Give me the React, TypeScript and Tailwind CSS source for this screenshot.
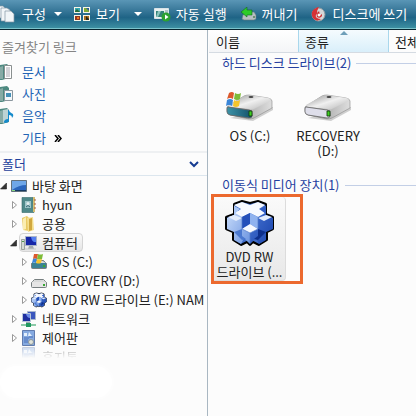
import React from 'react'

const DriveIcon = ({ windows, className }: { windows?: boolean; className: string }) => (
  <svg viewBox="0 0 48 28" className={className} aria-hidden="true">
    <defs>
      <linearGradient id="driveTop" x1="0" y1="0" x2="1" y2="1">
        <stop offset="0" stopColor="#8f8f8f" />
        <stop offset=".5" stopColor="#f0f0f0" />
        <stop offset="1" stopColor="#b4b4b4" />
      </linearGradient>
      <linearGradient id="driveSide" x1="0" y1="0" x2="1" y2="0">
        <stop offset="0" stopColor="#8a8a8a" />
        <stop offset="1" stopColor="#dedede" />
      </linearGradient>
      <linearGradient id="driveTeal" x1="0" y1="0" x2="1" y2="0">
        <stop offset="0" stopColor="#3c93a8" />
        <stop offset="1" stopColor="#14506a" />
      </linearGradient>
    </defs>
    <path d="M4 25l23 3 20-11v-3z" fill="#cfcfcf" />
    <path d="M1 14L18 3q2-1 5-1l19 3q4 1 4 3v7L28 25q-2 1-5 1L4 22q-3-1-3-4z" fill="url(#driveSide)" stroke="#888" strokeWidth=".6" />
    <path d="M2 12L18 3q2-1 5-1l19 3q4 1 2 3L28 16q-2 1-5 0L4 14q-3-1-2-2z" fill="url(#driveTop)" />
    <path d="M2 14l21 3q3 0 3 3v3q0 2-3 2L4 22q-3-1-3-3v-3q0-2 1-2z" fill={windows ? 'url(#driveTeal)' : '#dedeea'} stroke="#666" strokeWidth=".8" />
    <path d="M23 18h3v5h-3z" fill="#3fd021" stroke="#153d13" strokeWidth=".9" />
    <ellipse cx="25" cy="4" rx="2.500" ry="1" fill="#444" />
  </svg>
)

const WindowsFlag = ({ className }: { className: string }) => (
  <svg viewBox="0 0 16 15" className={className} aria-hidden="true">
    <path d="M3 1q3-2 5 0L7 7Q4 5 1 7z" fill="#dc592c" />
    <path d="M9 1q3 2 6 0l-1 6q-3 2-6 0z" fill="#7dbb38" />
    <path d="M1 8q3-2 6 0l-1 6q-3-2-6 0z" fill="#3b86d8" />
    <path d="M8 8q3 2 6 0l-1 6q-3 2-6 0z" fill="#f6c42c" />
  </svg>
)

const CubeIcon = ({ className }: { className: string }) => (
  <svg viewBox="0 0 50 48" className={className} aria-hidden="true">
    <defs>
      <linearGradient id="cubeLeft" x1="0" y1="0" x2="1" y2="1">
        <stop offset="0" stopColor="#cfe1fc" />
        <stop offset="1" stopColor="#6b94e0" />
      </linearGradient>
      <linearGradient id="cubeRight" x1="0" y1="0" x2="1" y2="1">
        <stop offset="0" stopColor="#4a78d6" />
        <stop offset="1" stopColor="#1a44ac" />
      </linearGradient>
    </defs>
    <path d="M9 5l8-3 8 2 8-2 8 3v10l7 3v12l-6 3v8l-8 5-6-3-3 3-3-3-6 3-8-5v-8l-7-3V18l8-3z" fill="#3f6cc8" stroke="#000" strokeWidth="2" strokeLinejoin="bevel" />
    <path d="M9 6v10l-7 3v11l7 3v8l7 4 3-6 6 6V30l-8-6v-6z" fill="url(#cubeLeft)" />
    <path d="M41 6v10l7 3v11l-7 3v8l-7 4-3-6-6 6V30l8-6v-6z" fill="url(#cubeRight)" />
    <path d="M9 6l8-3 8 3 8-3 7 3-6 4 6 4-7 4-8-4-8 4-7-4 6-4z" fill="#f6f9ff" />
    <path d="M9 7l6 3-6 5z" fill="#a9c6f6" />
    <path d="M41 7l-6 3 6 5z" fill="#2f5cc4" />
    <path d="M3 18l6-2 8 3-6 3zM47 18l-6-2-8 3 6 3z" fill="#e3edfd" />
    <path d="M17 18l8-4v11l-8 5z" fill="#2450ba" />
    <path d="M33 18l-8-4v11l8 5z" fill="#8fb2ef" />
    <path d="M17 30l8-5 8 5-8 4z" fill="#f6f9ff" />
    <path d="M9 33l8-3v7l4 3-4 1z" fill="#4a78d0" />
    <path d="M41 33l-8-3v7l-4 3 4 1z" fill="#0d2f8c" />
    <path d="M17 18v12l8 4v10M33 18v12l-8 4" fill="none" stroke="#5079c8" strokeWidth=".7" />
  </svg>
)

const PagesIcon = () => (
  <svg viewBox="0 0 15 18" className="h-[18px] w-[15px]" aria-hidden="true">
    <g fill="#f1f5f8" stroke="#8297a4" strokeWidth=".7">
      <path d="M-3 1h6l2 2v10h-8z" />
      <path d="M1 3h6l3 2v11H1z" />
      <path d="M5 6h6l3 3v8H5z" />
    </g>
  </svg>
)

const ViewsIcon = () => (
  <svg viewBox="0 0 16 14" className="h-[14px] w-4" aria-hidden="true">
    <path d="M0 0h7v6H0zM9 0h7v6H9zM0 8h7v6H0zM9 8h7v6H9z" fill="#f8f6e7" />
    <path d="M1 1h5v4H1z" fill="#36a6b3" />
    <path d="M10 1h5v4h-5z" fill="#7fac38" />
    <path d="M1 9h5v4H1z" fill="#923621" />
    <path d="M10 9h5v4h-5z" fill="#a66c1c" />
    <path d="M1 4l2-2 3 3H1z" fill="#276c36" />
    <path d="M12 1l3 3V1z" fill="#2c5a9a" />
    <path d="M3 10h2v2H3z" fill="#ef7b20" />
    <path d="M12 9l3 3v1h-3z" fill="#27271e" />
  </svg>
)

const AutoplayIcon = () => (
  <svg viewBox="0 0 17 15" className="h-[15px] w-[17px]" aria-hidden="true">
    <path d="M.5 1.500h14v10H.5z" fill="#e9f0f0" stroke="#d9e3e7" />
    <path d="M2 4h8v6H2z" fill="#358378" />
    <path d="M4 4h3L4 10H2z" fill="#8cc4bd" />
    <path d="M11 4h3M11 6h3" stroke="#7696a1" />
    <circle cx="12" cy="10" r="4.500" fill="#2ca231" />
    <path d="M11 7.500l3.500 2.500-3.500 2.500z" fill="#fff" />
  </svg>
)

const EjectIcon = () => (
  <svg viewBox="0 0 17 14" className="h-[14px] w-[17px]" aria-hidden="true">
    <path d="M3 8l4-3h7l2 3v4l-2 1H4l-2-1z" fill="#b8c0c1" stroke="#657b80" strokeWidth=".6" />
    <path d="M1 5l6-5v3h5v5H7v2z" fill="#2dcb28" stroke="#126a27" strokeWidth=".6" />
    <path d="M13 10h2" stroke="#265f2b" />
  </svg>
)

const BurnIcon = () => (
  <svg viewBox="0 0 15 15" className="h-[15px] w-[15px]" aria-hidden="true">
    <circle cx="7.500" cy="7.500" r="6.500" fill="#d6d7d7" stroke="#909ca1" />
    <path d="M8 0C2 1-1 6 2 11c2 3 6 3 8 1-4 0-6-2-5-4 1-1 2-2 1-4 1-1 1-3 2-4z" fill="#d73135" />
    <path d="M8 4q-3 3-2 6 3 2 5-1 0-2-1-2 0 2-1 1z" fill="#cc2428" />
    <circle cx="8" cy="8" r="1.500" fill="#fff" />
  </svg>
)

const LinkIcon = ({ kind }: { kind: 'doc' | 'photo' | 'music' }) => (
  <svg viewBox="0 0 14 16" className="h-4 w-[14px] shrink-0" aria-hidden="true">
    <path d="M0 1l7-1 2 2v12l-7 2H0z" fill="#4d8980" />
    <path d="M0 3l3-1v13H0z" fill="#86aaa5" />
    {kind === 'doc' && (
      <>
        <path d="M4.500 1.500h7v13h-7z" fill="#fff" stroke="#8a9090" />
        <path d="M6 4h4M6 6h4M6 8h4M6 10h4M6 12h4" stroke="#a8a8b0" />
      </>
    )}
    {kind === 'photo' && (
      <>
        <path d="M4.500 4.500h8v10h-8z" fill="#f3f7fa" stroke="#8b979e" />
        <path d="M6 7h5v4H6z" fill="#4591b8" />
      </>
    )}
    {kind === 'music' && (
      <>
        <path d="M3 2l5-1v12l-5 2z" fill="#bcd3d4" />
        <path d="M8 2h1q0 2 4 4 1 2-1 4 0-3-3-3v6q-1 2-4 2-2-1 0-3 1-1 3-1z" fill="#168bcb" />
      </>
    )}
  </svg>
)

const DesktopIcon = () => (
  <svg viewBox="0 0 16 14" className="h-[14px] w-4" aria-hidden="true">
    <path d="M.5 1.500h15v11H.5z" fill="#2b66bd" stroke="#62717d" />
    <path d="M1 2h14v4q-7 0-14 5z" fill="#6fa7e8" />
    <path d="M1 11h14v1H1z" fill="#173a62" />
    <path d="M1 11h3v1H1z" fill="#8adb82" />
  </svg>
)

const UserIcon = () => (
  <svg viewBox="0 0 16 16" className="h-4 w-4" aria-hidden="true">
    <path d="M1 .5h11l1 15H1z" fill="#4f8989" stroke="#386969" strokeWidth=".6" />
    <path d="M12 0h2v15h-2z" fill="#d5bd73" />
    <path d="M13 3h2M13 7h2M13 11h2" stroke="#a85941" />
    <path d="M4 4h6v7H4z" fill="#9ec5c8" />
    <circle cx="7" cy="6.500" r="1.500" fill="#e2eded" />
    <path d="M5 10q2-3 4 0" stroke="#376873" fill="none" />
  </svg>
)

const FolderIcon = () => (
  <svg viewBox="0 0 16 16" className="h-4 w-4" aria-hidden="true">
    <path d="M1 2l5-2 2 2v13l-6-1z" fill="#e8c963" />
    <path d="M6 2l6-1 1 13-6 2z" fill="#f4de8c" />
    <path d="M8 3l3-1v12l-3 1z" fill="#d1a83e" />
    <path d="M2 3l3-2v12l-3 1z" fill="#faedb1" />
  </svg>
)

const ComputerIcon = () => (
  <svg viewBox="0 0 16 16" className="h-4 w-4" aria-hidden="true">
    <path d="M.5 4.500h3v10h-3z" fill="#d5dbd6" stroke="#7e8a83" strokeWidth=".7" />
    <path d="M1 6h2v1H1z" fill="#519750" />
    <path d="M4.500 1.500h11v9h-11z" fill="#1727a8" stroke="#aab5c9" />
    <path d="M10 2h5v5q-4 1-5-5z" fill="#547ff0" />
    <path d="M8 11h4l1 3H7z" fill="#a3aab0" />
    <path d="M4 14h11" stroke="#c7ccce" />
  </svg>
)

const NetworkIcon = () => (
  <svg viewBox="0 0 16 16" className="h-4 w-4" aria-hidden="true">
    <path d="M6.500.5h8v8h-8z" fill="#3a56bd" stroke="#a9b7cc" />
    <path d="M1.500 2.500h8v8h-8z" fill="#1f2fa0" stroke="#b8c6da" />
    <path d="M5 3h4v4q-3 0-4-4z" fill="#6c8ce7" />
    <path d="M5 11h4v2H5z" fill="#9ea9b3" />
    <path d="M0 14h15" stroke="#8ccaa8" strokeWidth="2" />
    <path d="M5 12h5v4H5z" fill="#219860" />
  </svg>
)

const ControlIcon = () => (
  <svg viewBox="0 0 16 16" className="h-4 w-4" aria-hidden="true">
    <path d="M1.500.5h12v15h-12z" fill="#85aae1" stroke="#617cae" />
    <path d="M3 3h3v3H3zM8 2l3 4H7z" fill="#e3effc" />
    <path d="M3 8h5M3 10h4M3 12h4M8 7h4" stroke="#486fb7" />
    <circle cx="10" cy="12" r="2.500" fill="#dfe3da" stroke="#8b969c" />
  </svg>
)

const SmallDrive = ({ windows }: { windows?: boolean }) => (
  <svg viewBox="0 0 16 16" className="h-4 w-4" aria-hidden="true">
    <path d="M.5 9.500l3-3h9l3 3v4q0 1-1 1h-13q-1 0-1-1z" fill={windows ? '#3b8294' : '#e5e5e5'} stroke="#777f80" />
    <path d="M1 9l3-2h8l3 2z" fill="#d7d9d9" />
    <path d="M12 11h2v2h-2z" fill="#36a733" />
    {windows && (
      <>
        <path d="M3 0q2-1 4 0L6 5Q4 4 2 5z" fill="#dc592c" />
        <path d="M7 0q2 1 5 0l-1 5Q9 6 6 5z" fill="#7dbb38" />
        <path d="M2 5q2-1 4 0L5 9Q3 8 1 9z" fill="#3b86d8" />
        <path d="M6 5q2 1 5 0l-1 4Q8 10 5 9z" fill="#f6c42c" />
      </>
    )}
  </svg>
)

const Arrow = ({ open }: { open?: boolean }) => (
  <svg viewBox="0 0 8 10" className="h-[10px] w-2 shrink-0" aria-hidden="true">
    {open ? (
      <path d="M6.500 2v6h-6z" fill="#333" stroke="#222" strokeWidth=".6" />
    ) : (
      <path d="M2.500 1.500L6.500 5l-4 3.500z" fill="#fff" stroke="#999" />
    )}
  </svg>
)

const Caret = () => (
  <svg viewBox="0 0 8 4" className="h-1 w-2" aria-hidden="true">
    <path d="M0 0h8L4 4z" fill="#fff" />
  </svg>
)

const links = [
  { label: '문서', kind: 'doc' as const },
  { label: '사진', kind: 'photo' as const },
  { label: '음악', kind: 'music' as const },
]

const tree = [
  { label: '바탕 화면', icon: <DesktopIcon />, pad: 'pl-0', open: true },
  { label: 'hyun', icon: <UserIcon />, pad: 'pl-[10px]' },
  { label: '공용', icon: <FolderIcon />, pad: 'pl-[10px]' },
  { label: '컴퓨터', icon: <ComputerIcon />, pad: 'pl-[10px]', open: true, selected: true },
  { label: 'OS (C:)', icon: <SmallDrive windows />, pad: 'pl-5' },
  { label: 'RECOVERY (D:)', icon: <SmallDrive />, pad: 'pl-5' },
  { label: 'DVD RW 드라이브 (E:) NAM', icon: <CubeIcon className="h-4 w-4" />, pad: 'pl-5' },
  { label: '네트워크', icon: <NetworkIcon />, pad: 'pl-[10px]' },
  { label: '제어판', icon: <ControlIcon />, pad: 'pl-[10px]' },
]

const Toolbar = () => (
  <header className="flex h-[30px] shrink-0 items-center overflow-hidden border-b border-[#07252f] bg-linear-to-b from-[#5a96b6] from-0% via-[#1f6486] via-60% to-[#3f93a4] pb-px whitespace-nowrap text-white shadow-[inset_0_-1px_0_#7cc4cc]">
    <button className="flex items-center gap-[7px]"><PagesIcon />구성</button>
    <button className="ml-2" aria-label="구성 메뉴"><Caret /></button>
    <button className="ml-3 flex items-center gap-[6px]"><ViewsIcon />보기</button>
    <button className="ml-[14px]" aria-label="보기 메뉴"><Caret /></button>
    <button className="ml-3 flex items-center gap-[5px]"><AutoplayIcon />자동 실행</button>
    <button className="ml-[13px] flex items-center gap-[5px]"><EjectIcon />꺼내기</button>
    <button className="ml-[13px] flex items-center gap-[7px]"><BurnIcon />디스크에 쓰기</button>
  </header>
)

const Sidebar = () => (
  <aside className="flex w-1/2 shrink-0 flex-col overflow-hidden border-r border-[#a9b7c2]">
    <h2 className="pt-[7px] pl-[2px] leading-5 text-[#858585]">즐겨찾기 링크</h2>
    <nav className="mt-[4px] text-[#2264b5]">
      {links.map((l) => (
        <a key={l.label} href="#" className="flex h-[22px] items-center gap-2">
          <LinkIcon kind={l.kind} />{l.label}
        </a>
      ))}
      <a href="#" className="flex h-[22px] items-center gap-2 pl-[22px]">
        기타
        <svg viewBox="0 0 8 7" className="h-[7px] w-2" aria-hidden="true">
          <path d="M1 0l3 3.500L1 7M4 0l3 3.500L4 7" fill="none" stroke="#000" strokeWidth="1.500" />
        </svg>
      </a>
    </nav>
    <button className="mt-[2px] flex h-[25px] items-center justify-between border-t-2 border-b border-t-[#eef0f2] border-b-[#dce6ee] pr-2 pl-[2px] text-[#1d409b]">
      폴더
      <svg viewBox="0 0 10 7" className="h-[7px] w-[10px]" aria-hidden="true">
        <path d="M1 1l4 4 4-4" fill="none" stroke="#163c91" strokeWidth="2" />
      </svg>
    </button>
    <ul className="whitespace-nowrap">
      {tree.map((t) => (
        <li key={t.label} className={`flex h-[19px] items-center ${t.pad}`}>
          <Arrow open={t.open} />
          <span className={t.selected ? 'ml-px flex h-[19px] items-center gap-[5px] rounded-sm border border-[#d4d4d4] bg-linear-to-b from-[#fafafa] to-[#e5e5e5] pr-1 pl-px' : 'ml-[3px] flex items-center gap-[5px]'}>
            {t.icon}
            {t.label}
          </span>
        </li>
      ))}
      <li className="flex h-[19px] items-start gap-[5px] overflow-hidden pl-[21px] opacity-35 mask-b-from-10% mask-b-to-60%">
        <ControlIcon />휴지통
      </li>
    </ul>
    <div className="h-8 w-28 rounded-full bg-white shadow-[0_0_6px_#fff]" />
  </aside>
)

const Group = ({ title }: { title: string }) => (
  <h2 className="flex h-5 items-center gap-[5px] pl-[13px] whitespace-nowrap text-[#253fa0] after:h-px after:flex-1 after:bg-[#c3cfe6]">
    {title}
  </h2>
)

const Content = () => (
  <main className="min-w-0 flex-1 overflow-hidden pl-px">
    <div className="flex h-[23px] overflow-hidden border-b border-[#d5dbe2] whitespace-nowrap">
      <button className="w-[90px] shrink-0 border-r border-[#a9d7ec] bg-linear-to-b from-white to-[#f4f5f7] pt-px pl-[7px] text-left">이름</button>
      <button className="relative w-[90px] shrink-0 border-r border-[#a9d7ec] bg-linear-to-b from-[#f5fbfe] to-[#d9effa] pt-px pl-[6px] text-left">
        종류
        <svg viewBox="0 0 8 4" className="absolute top-px left-[41px] h-1 w-2" aria-hidden="true">
          <path d="M0 4l4-4 4 4z" fill="#6f9fb9" />
        </svg>
      </button>
      <button className="shrink-0 pt-px pl-[6px]">전체</button>
    </div>
    <section>
      <Group title="하드 디스크 드라이브(2)" />
      <div className="flex pt-[20px] text-center leading-[15px]">
        <div className="flex w-[82px] flex-col items-center">
          <div className="relative">
            <DriveIcon windows className="h-7 w-12" />
            <WindowsFlag className="absolute -top-px left-0 h-[15px] w-4" />
          </div>
          <span className="mt-[7px]">OS (C:)</span>
        </div>
        <div className="flex w-[74px] flex-col items-center">
          <DriveIcon className="h-7 w-12" />
          <span className="mt-[7px]">RECOVERY<br />(D:)</span>
        </div>
      </div>
    </section>
    <section className="mt-[17px]">
      <Group title="이동식 미디어 장치(1)" />
      <div className="-mt-px ml-[2px] w-[92px] border-3 border-[#ec692e]">
        <div className="flex h-[84px] w-[72px] flex-col items-center rounded-r border-r border-b border-[#dcdcdc] bg-linear-to-b from-[#fafafa] to-[#e8e8e8] pt-[2px] text-center leading-[15px]">
          <CubeIcon className="h-12 w-[50px] shrink-0" />
          <span className="mt-[2px] whitespace-nowrap">DVD RW<br />드라이브 (...</span>
        </div>
      </div>
    </section>
  </main>
)

const App = () => {
  return (
    <div className="flex min-h-screen flex-col bg-[#fcfcfc] font-['Noto_Sans_CJK_KR',sans-serif] text-[13px] text-[#222]">
      <Toolbar />
      <div className="flex flex-1">
        <Sidebar />
        <Content />
      </div>
    </div>
  )
}

export default App
